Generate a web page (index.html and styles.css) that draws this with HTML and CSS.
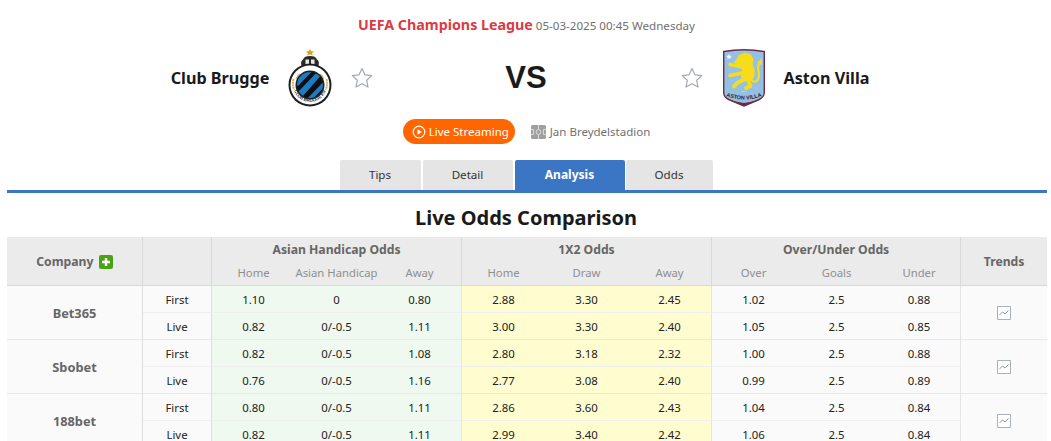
FILE: index.html
```html
<!DOCTYPE html>
<html lang="en">
<head>
<meta charset="utf-8">
<title>Club Brugge vs Aston Villa</title>
<link rel="stylesheet" href="styles.css">
</head>
<body>
<header class="match">
  <div class="league-line"><span class="league">UEFA Champions League</span> <span class="kickoff">05-03-2025 00:45 Wednesday</span></div>
  <div class="teams">
    <div class="team team-home">
      <span class="team-name">Club Brugge</span>
      <svg class="crest" width="44" height="60" viewBox="0 0 44 60">
        <defs>
          <clipPath id="disc"><circle cx="22" cy="37" r="13"/></clipPath>
          <path id="brugge-arc" d="M5.500 41a17 17 0 0 0 33 0"/>
        </defs>
        <path d="M22 .8l1.300 2.700 3 .3-2.200 2 .6 3-2.700-1.500-2.700 1.500.6-3-2.200-2 3-.3z" fill="#d9a21f" transform="translate(0 .4) scale(1 .8)"/>
        <path d="M15 20c-2.500-3-2.500-7 0-8.500 1-2.500 3-3.500 7-3.500s6 1 7 3.500c2.500 1.500 2.500 5.500 0 8.500z" fill="#2a2a2a"/>
        <path d="M17.500 11.500h9v5.500h-9z" fill="#e8e8e8"/><path d="M21 11h2v6.500h-2zM17.500 17.500h9V19h-9z" fill="#2a2a2a"/>
        <circle cx="22" cy="37" r="21.500" fill="#1f1f1f"/>
        <circle cx="22" cy="37" r="19.500" fill="#fff"/>
        <path d="M5.500 31c-1.200 5 -.5 8 1 11M38.500 31c1.200 5 .5 8-1 11" fill="none" stroke="#d9b766" stroke-width="2" stroke-dasharray="2 .6"/>
        <path d="M8 31c1-2 2-4 4-5M36 31c-1-2-2-4-4-5" fill="none" stroke="#d9b766" stroke-width="1.200"/>
        <circle cx="22" cy="37" r="14.500" fill="#1f1f1f"/>
        <g clip-path="url(#disc)">
          <circle cx="22" cy="37" r="13" fill="#0f0f0f"/>
          <path d="M6 34L24 16l4 3L10 38zM10 44L31 22l4 3L15 48zM18 52l20-21 3 3-20 21z" fill="#1a7cc6"/>
        </g>
        <text class="crest-text"><textPath href="#brugge-arc" startOffset="50%" text-anchor="middle">CLUB BRUGGE KV</textPath></text>
      </svg>
      <svg class="star" width="22" height="22" viewBox="0 0 22 22"><path d="M11 1.500l2.900 6.300 6.800.8-5 4.700 1.300 6.800-6-3.400-6 3.400 1.300-6.800-5-4.700 6.800-.8z" fill="#fff" stroke="#a3a9b3" stroke-width="1.200" stroke-linejoin="round"/></svg>
    </div>
    <div class="versus">VS</div>
    <div class="team team-away">
      <svg class="star" width="22" height="22" viewBox="0 0 22 22"><path d="M11 1.500l2.900 6.300 6.800.8-5 4.700 1.300 6.800-6-3.400-6 3.400 1.300-6.800-5-4.700 6.800-.8z" fill="#fff" stroke="#a3a9b3" stroke-width="1.200" stroke-linejoin="round"/></svg>
      <svg class="crest" width="44" height="60" viewBox="0 0 44 60">
        <defs><path id="villa-arc" d="M5 48.500q17 6 34 0"/></defs>
        <path d="M1.700 3.500Q22 0 42.300 3.500V44.500c0 3-2 5.500-5 7L22 58 6.700 51.500c-3-1.500-5-4-5-7z" fill="#94c0e2" stroke="#6d2a4a" stroke-width="1.400"/>
        <path d="M8 52.500L22 55l14-2.500L22 58z" fill="#6d2a4a"/>
        <path d="M7 6l.8 1.800 1.900.2-1.500 1.200.5 1.900L7 10.100l-1.700 1 .5-1.900L4.300 8l1.900-.2z" fill="#fff"/>
        <g fill="none" stroke="#f7dc1c" stroke-linecap="round" stroke-linejoin="round">
          <path d="M29 31c3 5 8 3 8-5 0-4-3-7 1-12" stroke-width="2.200"/>
          <path d="M20 19L8 16.500" stroke-width="3.600"/>
          <path d="M20 25L8 27.500" stroke-width="3.600"/>
          <path d="M26 32l2.500 6-4.500 2" stroke-width="3.800"/>
          <path d="M21 32l-6 3-3 3.500" stroke-width="3.800"/>
        </g>
        <path d="M14 12l3-5 6-2.500 6 2 2.500 5-1 5 2.500 6-1 7-3 4h-8l-2-5 1-7-3-4-4-1-1-3z" fill="#f7dc1c"/>
        <path d="M35 15l5-5 0 7z" fill="#f7dc1c"/>
        <text x="22" y="44" class="crest-year" text-anchor="middle">1874</text>
        <text class="crest-text crest-text-villa"><textPath href="#villa-arc" startOffset="50%" text-anchor="middle">ASTON VILLA</textPath></text>
      </svg>
      <span class="team-name">Aston Villa</span>
    </div>
  </div>
  <div class="meta">
    <a class="live-pill" href="#">
      <svg width="14" height="14" viewBox="0 0 14 14"><circle cx="7" cy="7" r="5.800" fill="none" stroke="#fff" stroke-width="1.200"/><path d="M5.500 4.300v5.400L9.800 7z" fill="#fff"/></svg>
      Live Streaming
    </a>
    <span class="venue">
      <svg class="venue-icon" width="15" height="14" viewBox="0 0 15 14"><rect width="15" height="14" rx="1.500" fill="#a0a0a0"/><path d="M0 4.500h2.500v5H0M15 4.500h-2.500v5H15M7.500 0v14" fill="none" stroke="#e2e2e2" stroke-width=".9"/><circle cx="7.500" cy="7" r="2.400" fill="#a0a0a0" stroke="#e2e2e2" stroke-width=".9"/></svg>
      Jan Breydelstadion
    </span>
  </div>
</header>
<nav class="tabs">
  <a class="tab tab-tips" href="#">Tips</a>
  <a class="tab tab-detail" href="#">Detail</a>
  <a class="tab tab-analysis is-active" href="#">Analysis</a>
  <a class="tab tab-odds" href="#">Odds</a>
</nav>
<main class="content">
  <h2 class="section-title">Live Odds Comparison</h2>
  <table class="odds">
    <colgroup>
      <col class="c-company"><col class="c-kind">
      <col class="c-83"><col class="c-83"><col class="c-84">
      <col class="c-83"><col class="c-83"><col class="c-84">
      <col class="c-83"><col class="c-83"><col class="c-83">
      <col class="c-trend">
    </colgroup>
    <thead>
      <tr class="head-top">
        <th rowspan="2" class="th-main">Company <span class="plus"><svg width="14" height="14" viewBox="0 0 14 14"><rect width="14" height="14" rx="2" fill="#4aa312"/><path d="M7 3v8M3 7h8" stroke="#fff" stroke-width="2.400"/></svg></span></th>
        <th rowspan="2" class="th-main"></th>
        <th colspan="3" class="th-group">Asian Handicap Odds</th>
        <th colspan="3" class="th-group">1X2 Odds</th>
        <th colspan="3" class="th-group">Over/Under Odds</th>
        <th rowspan="2" class="th-main th-last">Trends</th>
      </tr>
      <tr class="head-sub">
        <th>Home</th><th>Asian Handicap</th><th class="end">Away</th>
        <th>Home</th><th>Draw</th><th class="end">Away</th>
        <th>Over</th><th>Goals</th><th class="end">Under</th>
      </tr>
    </thead>
    <tbody>
      <tr class="first">
        <td rowspan="2" class="company">Bet365</td><td class="kind">First</td>
        <td class="ah">1.10</td><td class="ah">0</td><td class="ah end">0.80</td>
        <td class="x2">2.88</td><td class="x2">3.30</td><td class="x2 end">2.45</td>
        <td class="ou">1.02</td><td class="ou">2.5</td><td class="ou end">0.88</td>
        <td rowspan="2" class="trend"><svg width="14" height="14" viewBox="0 0 14 14"><path d="M.5.500h13v13H.5z" fill="#fff" stroke="#aab1bb"/><path d="M2.500 9l3-3 2.500 2 3.500-3.500" fill="none" stroke="#8a96a6"/></svg></td>
      </tr>
      <tr class="second">
        <td class="kind">Live</td>
        <td class="ah">0.82</td><td class="ah">0/-0.5</td><td class="ah end">1.11</td>
        <td class="x2">3.00</td><td class="x2">3.30</td><td class="x2 end">2.40</td>
        <td class="ou">1.05</td><td class="ou">2.5</td><td class="ou end">0.85</td>
      </tr>
      <tr class="first">
        <td rowspan="2" class="company">Sbobet</td><td class="kind">First</td>
        <td class="ah">0.82</td><td class="ah">0/-0.5</td><td class="ah end">1.08</td>
        <td class="x2">2.80</td><td class="x2">3.18</td><td class="x2 end">2.32</td>
        <td class="ou">1.00</td><td class="ou">2.5</td><td class="ou end">0.88</td>
        <td rowspan="2" class="trend"><svg width="14" height="14" viewBox="0 0 14 14"><path d="M.5.500h13v13H.5z" fill="#fff" stroke="#aab1bb"/><path d="M2.500 9l3-3 2.500 2 3.500-3.500" fill="none" stroke="#8a96a6"/></svg></td>
      </tr>
      <tr class="second">
        <td class="kind">Live</td>
        <td class="ah">0.76</td><td class="ah">0/-0.5</td><td class="ah end">1.16</td>
        <td class="x2">2.77</td><td class="x2">3.08</td><td class="x2 end">2.40</td>
        <td class="ou">0.99</td><td class="ou">2.5</td><td class="ou end">0.89</td>
      </tr>
      <tr class="first">
        <td rowspan="2" class="company">188bet</td><td class="kind">First</td>
        <td class="ah">0.80</td><td class="ah">0/-0.5</td><td class="ah end">1.11</td>
        <td class="x2">2.86</td><td class="x2">3.60</td><td class="x2 end">2.43</td>
        <td class="ou">1.04</td><td class="ou">2.5</td><td class="ou end">0.84</td>
        <td rowspan="2" class="trend"><svg width="14" height="14" viewBox="0 0 14 14"><path d="M.5.500h13v13H.5z" fill="#fff" stroke="#aab1bb"/><path d="M2.500 9l3-3 2.500 2 3.500-3.500" fill="none" stroke="#8a96a6"/></svg></td>
      </tr>
      <tr class="second">
        <td class="kind">Live</td>
        <td class="ah">0.82</td><td class="ah">0/-0.5</td><td class="ah end">1.11</td>
        <td class="x2">2.99</td><td class="x2">3.40</td><td class="x2 end">2.42</td>
        <td class="ou">1.06</td><td class="ou">2.5</td><td class="ou end">0.84</td>
      </tr>
    </tbody>
  </table>
</main>
</body>
</html>
```
FILE: styles.css
```css
* { box-sizing: border-box; }
html, body { margin: 0; padding: 0; height: 441px; overflow: hidden; background: #fff; }
body { font-family: "Noto Sans", sans-serif; font-size: 11.500px; color: #222; }
a { text-decoration: none; }

.match { height: 160px; padding-top: 16px; }
.league-line { height: 18px; line-height: 18px; text-align: center; white-space: nowrap; padding-left: 2px; }
.league { font-size: 14.250px; font-weight: 700; color: #dc3a43; }
.kickoff { font-size: 11.600px; color: #707070; }

.teams { display: grid; grid-template-columns: 1fr 306px 1fr; height: 60px; margin-top: 14px; align-items: center; }
.team { display: flex; align-items: center; }
.team-home { justify-content: flex-end; }
.team-away { padding-left: 2px; }
.team-name { font-size: 16.200px; font-weight: 700; color: #1a1a1a; }
.team-home .crest { margin: 0 19px 0 18px; }
.team-away .crest { margin: 0 18px 0 19px; }
.crest-text { font-family: "Liberation Sans", sans-serif; font-size: 4.500px; font-weight: 700; fill: #333; }
.crest-text-villa { font-size: 5.500px; fill: #3d1428; }
.crest-year { font-family: "Liberation Sans", sans-serif; font-size: 2.500px; fill: #eef; }
.versus { text-align: center; font-family: "Liberation Sans", sans-serif; font-size: 31px; font-weight: 700; color: #1a1a1a; line-height: 60px; padding-left: 1px; }

.meta { display: flex; justify-content: center; align-items: center; gap: 16px; height: 25px; margin-top: 11px; padding-left: 2px; }
.live-pill { display: flex; align-items: center; gap: 3px; height: 25px; width: 112px; padding-left: 9px; border-radius: 13px; background: #ff6600; color: #fff; font-size: 11.500px; white-space: nowrap; }
.venue { display: flex; align-items: center; gap: 4px; color: #707070; font-size: 11.500px; white-space: nowrap; }
.venue-icon { flex: none; }

.tabs { display: flex; justify-content: center; gap: 2px; height: 30px; padding-left: 1px; }
.tab { display: flex; align-items: center; justify-content: center; background: #e5e5e5; color: #333; font-size: 11.600px; padding-bottom: 1px; border-radius: 2px 2px 0 0; }
.tab-tips { width: 81px; }
.tab-detail { width: 90px; }
.tab-analysis { width: 110px; margin-right: -1px; }
.tab-odds { width: 87px; }
.tab.is-active { background: #3b76c4; color: #fff; font-weight: 700; font-size: 12px; }

.content { margin: 0 4px 0 7px; border-top: 3px solid #3b76c4; }
.section-title { margin: 0; height: 44px; line-height: 49px; text-align: center; font-size: 20px; font-weight: 700; color: #1a1a1a; padding-right: 2px; }

.odds { width: 1040px; table-layout: fixed; border-collapse: separate; border-spacing: 0; }
.c-company { width: 136px; }
.c-kind { width: 69px; }
.c-83 { width: 83px; }
.c-84 { width: 84px; }
.c-trend { width: 86px; }

.odds th, .odds td { padding: 0; text-align: center; font-weight: 400; white-space: nowrap; line-height: 16px; }
.odds thead th { background: #ebebeb; }
.head-top th { height: 25px; }
.odds .head-sub th { height: 24px; color: #8f8f8f; font-size: 11.300px; border-bottom: 1px solid #d9d9d9; padding-bottom: 2px; }
.head-sub th.end { border-right: 1px solid #d9d9d9; }
.odds .th-main { border-right: 1px solid #d9d9d9; border-bottom: 1px solid #d9d9d9; font-weight: 700; color: #666; font-size: 12.200px; padding-top: 2px; }
.odds .th-last { border-right: 0; }
.odds .th-group { font-weight: 700; color: #666; font-size: 12.200px; border-right: 1px solid #d9d9d9; }
.plus { display: inline-block; vertical-align: -3px; margin-left: 2px; line-height: 0; }

.odds td { height: 27px; font-size: 11.400px; color: #222; border-bottom: 1px solid #e8e8e8; padding-top: 1px; }
.odds .company { background: #fafafa; color: #666; font-weight: 700; font-size: 12.800px; border-right: 1px solid #dedede; }
.kind { background: #fafafa; border-right: 1px solid #dedede; }
.ah { background: #eff9ef; }
.x2 { background: #fffdd0; }
.ou { background: #fafafa; }
.ah.end, .x2.end, .ou.end { border-right: 1px solid #e4e4e4; }
.odds .trend { background: #fafafa; line-height: 0; padding-top: 0; }
.first td.kind, .first td.ah, .first td.x2, .first td.ou { border-bottom-color: #efefef; }
```
